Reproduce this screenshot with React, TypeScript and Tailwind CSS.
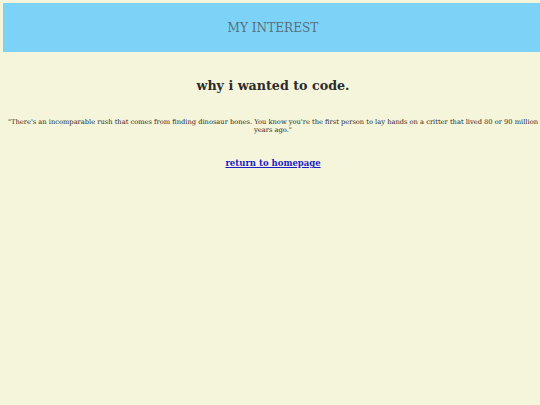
export default function App() {
  return (
    <div className="min-h-screen bg-[#f5f5dc] pt-[3px] pl-[3px] overflow-hidden font-['DejaVu_Serif',serif]">
      <div className="w-[540px]">
        {/* banner */}
        <header className="h-[49px] bg-[#7dd3f7] flex items-center justify-center">
          <h1 className="mt-[1px] text-[12.1px] text-[#55707a]">MY INTEREST</h1>
        </header>

        <main className="flex flex-col items-center text-center">
          <h2 className="mt-[24px] text-[12.7px] font-bold text-[#2b2b2b]">why i wanted to code.</h2>
          <p className="mt-[23px] w-[546px] text-[6.7px] leading-[8px] text-[#2b2b2b]">
            "There's an incomparable rush that comes from finding dinosaur bones. You know you're the first person to lay hands on a critter that lived 80 or 90 million years ago."
          </p>
          <a href="#" className="mt-[23px] text-[8.5px] font-bold text-[#1c1cc8] underline">
            return to homepage
          </a>
        </main>
      </div>
    </div>
  );
}
